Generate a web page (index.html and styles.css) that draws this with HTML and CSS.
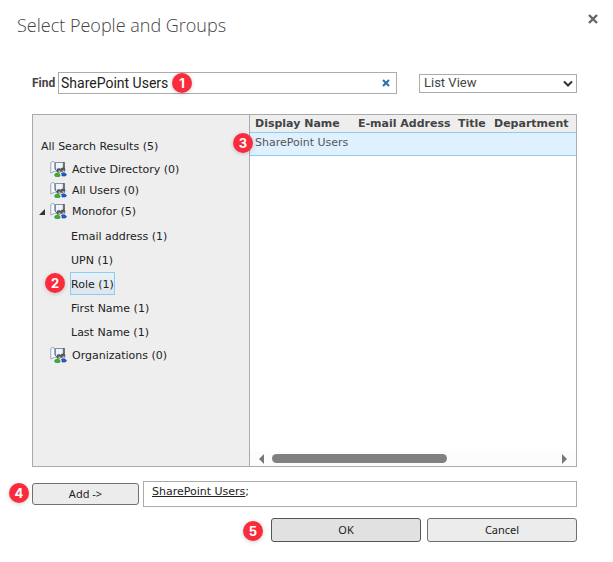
FILE: index.html
```html
<!DOCTYPE html>
<html lang="en">
<head>
<meta charset="utf-8">
<title>Select People and Groups</title>
<link rel="stylesheet" href="styles.css">
</head>
<body>
<svg class="defs" aria-hidden="true">
  <symbol id="directory" viewBox="0 0 17 16">
    <path d="M5 1.500h9v8H5z" fill="#d3deea" stroke="#8791a0"/>
    <path d="M6 2h6v5H6z" fill="#eef4fa"/>
    <path d="M14 1v9" stroke="#4b5666" stroke-width="1.400"/>
    <path d="M.8 11.500V2Q1.200 .5 2.800 .5T5 2.500V8L8 11 5 10 .8 12z" fill="#f8fbff" stroke="#8293ad" stroke-width=".8"/>
    <path d="M5 2v6l3 3" fill="none" stroke="#56657c" stroke-width=".8"/>
    <path d="M4.500 14Q5 12 8 12L11 14 9.500 15.500H5.500z" fill="#35b52c" stroke="#217d28" stroke-width=".6"/>
    <path d="M11 13Q12 11 15 12L16.500 13.500 15.500 15H12z" fill="#2455df" stroke="#193ca0" stroke-width=".6"/>
    <circle cx="9" cy="9.500" r="2.300" fill="#4d5150"/>
    <circle cx="13" cy="9" r="2.400" fill="#555756"/>
    <path d="M8.500 9.500h2v2h-2zM12.500 9.200h2v2h-2z" fill="#c7c0b2"/>
    <path d="M10 12l2 2-1.500 1z" fill="#edf1f7"/>
  </symbol>
</svg>
<main class="dialog">
  <header class="titlebar">
    <h1>Select People and Groups</h1>
    <button class="close" aria-label="Close"><svg viewBox="0 0 10 10"><path d="M1 1l8 8M9 1L1 9"/></svg></button>
  </header>
  <form class="content">
    <div class="search">
      <label class="find-label" for="find">Find</label>
      <div class="find-box">
        <input id="find" type="text" value="SharePoint Users">
        <button type="button" class="clear" aria-label="Clear search"><svg viewBox="0 0 8 8"><path d="M1 1l6 6M7 1L1 7"/></svg></button>
        <span class="badge badge-find">1</span>
      </div>
      <div class="view-box">
        <select aria-label="View"><option>List View</option></select>
        <svg viewBox="0 0 10 7"><path d="M1 1.500l4 4 4-4"/></svg>
      </div>
    </div>
    <section class="panel">
      <nav class="tree">
        <a class="all" href="#">All Search Results (5)</a>
        <ul>
          <li><a class="group" href="#"><svg><use href="#directory"/></svg>Active Directory (0)</a></li>
          <li><a class="group" href="#"><svg><use href="#directory"/></svg>All Users (0)</a></li>
          <li><a class="group open" href="#"><svg><use href="#directory"/></svg>Monofor (5)</a>
            <ul class="children">
              <li><a href="#">Email address (1)</a></li>
              <li><a href="#">UPN (1)</a></li>
              <li><a class="selected" href="#">Role (1)<span class="badge badge-role">2</span></a></li>
              <li><a href="#">First Name (1)</a></li>
              <li><a href="#">Last Name (1)</a></li>
            </ul>
          </li>
          <li><a class="group" href="#"><svg><use href="#directory"/></svg>Organizations (0)</a></li>
        </ul>
      </nav>
      <div class="results">
        <table>
          <thead><tr><th class="name">Display Name</th><th class="mail">E-mail Address</th><th class="job">Title</th><th>Department</th></tr></thead>
          <tbody><tr><td>SharePoint Users</td><td></td><td></td><td></td></tr></tbody>
        </table>
        <span class="badge badge-result">3</span>
        <div class="scrollbar"><i class="arrow left"></i><div class="track"><div class="thumb"></div></div><i class="arrow right"></i></div>
      </div>
    </section>
    <div class="add-row">
      <button type="button" class="add">Add -&gt;<span class="badge badge-add">4</span></button>
      <div class="picked"><a href="#">SharePoint Users</a>;</div>
    </div>
    <div class="actions">
      <button type="button" class="ok">OK<span class="badge badge-ok">5</span></button>
      <button type="button">Cancel</button>
    </div>
  </form>
</main>
</body>
</html>
```

FILE: styles.css
```css
* { box-sizing: border-box; }
body { margin: 0; background: #fff; color: #222; font: 11px/14px "DejaVu Sans", sans-serif; }
button, input, select { font: inherit; color: inherit; margin: 0; }
a { color: inherit; text-decoration: none; }
ul { list-style: none; margin: 0; padding: 0; }
.defs { position: absolute; width: 0; height: 0; }
.titlebar { display: flex; justify-content: space-between; align-items: flex-start; padding: 11px 15px 0 17px; height: 72px; }
h1 { margin: 0; font: 300 18px/28px "Open Sans", sans-serif; color: #444; }
.close, .clear { border: 0; padding: 0; background: none; display: flex; }
.close { margin-top: 3px; }
.close svg { width: 10px; height: 10px; stroke: #666; stroke-width: 2.4; }
.content { padding: 0 36px 20px 32px; }
.search { display: flex; align-items: center; height: 22px; }
.find-label { width: 26px; font: bold 12px/14px Roboto, sans-serif; color: #444; }
.find-box { flex: 1; display: flex; align-items: center; position: relative; height: 22px; border: 1px solid #ababab; padding-right: 6px; }
.find-box input { flex: 1; min-width: 0; border: 0; padding: 0 2px; outline: 0; background: none; font: 14px/18px Roboto, sans-serif; color: #222; }
.clear svg { width: 8px; height: 8px; stroke: #2a70aa; stroke-width: 2; }
.view-box { display: flex; align-items: center; position: relative; width: 158px; height: 19px; margin-left: 22px; }
.view-box select { appearance: none; width: 100%; height: 19px; padding: 0 4px; border: 1px solid #ababab; border-radius: 0; background: #fff; font: 13px/16px Roboto, sans-serif; color: #444; }
.view-box svg { position: absolute; right: 4px; width: 10px; height: 7px; fill: none; stroke: #333; stroke-width: 2; pointer-events: none; }
.panel { display: flex; height: 353px; margin-top: 20px; border: 1px solid #ababab; }
.tree { width: 217px; padding: 20px 0 0 8px; background: #eee; border-right: 1px solid #ababab; }
.tree a { display: flex; align-items: center; width: max-content; position: relative; }
.tree .all { height: 24px; }
.tree .group { height: 21px; gap: 5px; padding-left: 9px; }
.group svg { width: 17px; height: 16px; margin-bottom: 2px; }
.open::before { content: ""; position: absolute; left: -2px; border-left: 6px solid transparent; border-bottom: 6px solid #333; }
.children { margin-top: 2px; margin-bottom: 1px; padding-left: 29px; }
.children li { height: 24px; }
.children a { height: 24px; padding-top: 1px; border: 1px solid transparent; }
.children .selected { height: 23px; padding-top: 2px; border-color: #8dccf7; background: linear-gradient(#eaf0f5, #dde6ed); }
.results { flex: 1; min-width: 0; display: flex; flex-direction: column; justify-content: space-between; position: relative; }
table { width: 100%; border-collapse: collapse; table-layout: fixed; }
th, td { padding: 0 0 0 5px; text-align: left; white-space: nowrap; }
th { height: 17px; padding-top: 2px; background: #eee; color: #444; }
th.name { width: 103px; }
th.mail { width: 100px; }
th.job { width: 36px; }
td { height: 23px; padding-bottom: 2px; background: #dff1ff; border-top: 1px solid #8dccf7; border-bottom: 1px solid #8dccf7; color: #555; }
.scrollbar { display: flex; align-items: center; gap: 8px; height: 15px; padding: 0 9px; background: #fcfcfc; }
.track { flex: 1; }
.thumb { width: 62%; height: 9px; border-radius: 5px; background: #808080; }
.arrow { border: 5px solid transparent; }
.arrow.left { border-left: 0; border-right-color: #777; }
.arrow.right { border-right: 0; border-left-color: #777; }
.add-row { display: flex; gap: 4px; margin-top: 14px; }
.add-row button, .actions button { position: relative; border: 1px solid #707070; border-radius: 3px; background: #ececec; color: #222; font: 11px/14px "Noto Sans", sans-serif; padding: 0; }
.add-row .add { width: 107px; height: 22px; margin-top: 2px; }
.picked { flex: 1; height: 26px; padding: 3px 8px; border: 1px solid #ababab; }
.picked a { text-decoration: underline; }
.actions { display: flex; justify-content: flex-end; gap: 6px; margin-top: 11px; }
.actions button { width: 150px; height: 24px; }
.actions .ok { border-color: #555; background: #e1e1e1; }
.badge { position: absolute; width: 20px; height: 20px; border-radius: 50%; background: #fa2c3c; color: #fff; font: bold 13px/20px Inter, sans-serif; text-align: center; box-shadow: 0 1px 4px #0003; }
.badge-find { left: 113px; top: 0; }
.badge-role { left: -26px; top: 0; }
.badge-result { left: -17px; top: 18px; }
.badge-add { left: -24px; top: -1px; }
.badge-ok { left: -29px; top: 2px; }
```
